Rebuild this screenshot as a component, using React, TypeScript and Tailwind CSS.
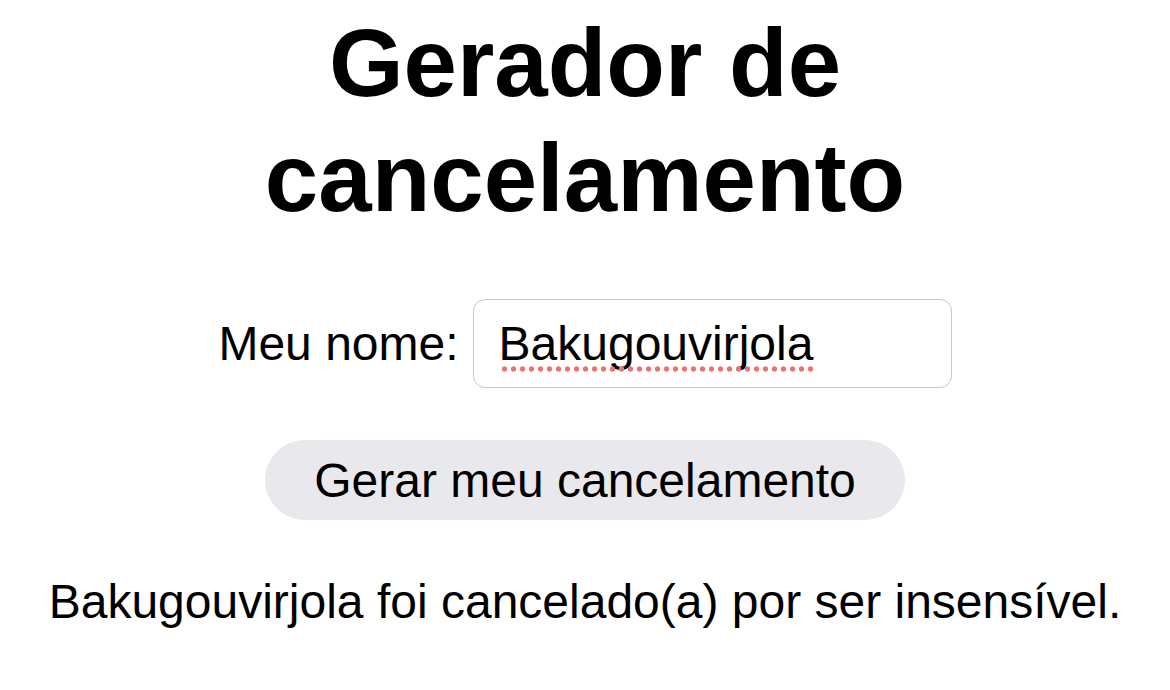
import React, { useState } from "react";

export default function App() {
  const [name, setName] = useState("Bakugouvirjola");
  const [result, setResult] = useState("Bakugouvirjola foi cancelado(a) por ser insensível.");
  return (
    <div
      className="min-h-screen bg-white text-black flex flex-col items-center pt-[5px]"
      style={{ fontFamily: '"Liberation Sans", Arial, Helvetica, sans-serif' }}
    >
      <h1 className="text-[96px] font-bold leading-[115px] text-center">
        Gerador de
        <br />
        cancelamento
      </h1>
      <div className="mt-[64px] flex items-center">
        <label className="text-[48px] leading-[55px] mr-[14px]">Meu nome:</label>
        <div className="relative">
          <input
            value={name}
            onChange={(e) => setName(e.target.value)}
            spellCheck={false}
            className="w-[479px] h-[89px] border border-[#c8c8cc] rounded-[12px] pl-[25px] text-[48px] outline-none"
            style={{ fontFamily: '"Liberation Sans", Arial, sans-serif' }}
          />
          {name === "Bakugouvirjola" && (
            <span className="pointer-events-none absolute left-[27px] top-[67px] w-[315px] h-[6px] bg-[radial-gradient(circle,#ef7272_2.4px,transparent_2.9px)] bg-[length:9px_6px] bg-repeat-x" />
          )}
        </div>
      </div>
      <button
        onClick={() => setResult(`${name} foi cancelado(a) por ser insensível.`)}
        className="mt-[52px] h-[80px] px-[49px] rounded-full bg-[#e9e9ed] text-[48px] leading-[55px]"
      >
        Gerar meu cancelamento
      </button>
      <p className="mt-[54px] text-[48px] leading-[55px] text-center">{result}</p>
    </div>
  );
}
